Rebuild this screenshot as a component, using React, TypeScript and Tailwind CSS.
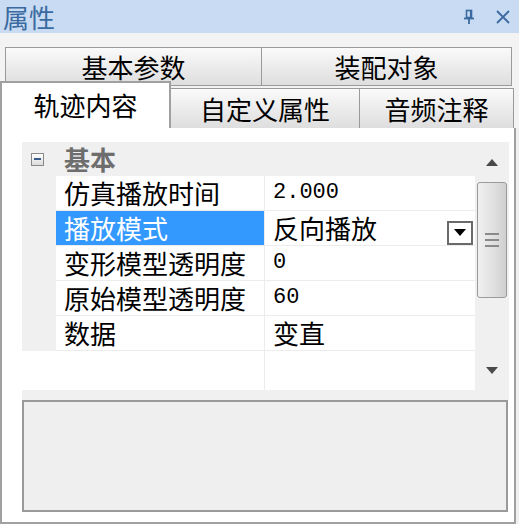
import React from "react";

const cjk = { fontFamily: '"Noto Sans CJK SC", "Noto Sans", sans-serif' };
const mono = { fontFamily: '"Liberation Mono", "Noto Sans CJK SC", monospace' };

interface Prop {
  name: string;
  value: string;
  numeric?: boolean;
  selected?: boolean;
  dropdown?: boolean;
}

const props: Prop[] = [
  { name: "仿真播放时间", value: "2.000", numeric: true },
  { name: "播放模式", value: "反向播放", selected: true, dropdown: true },
  { name: "变形模型透明度", value: "0", numeric: true },
  { name: "原始模型透明度", value: "60", numeric: true },
  { name: "数据", value: "变直" },
];

function Tab({ label, className }: { label: string; className: string }) {
  return (
    <div
      className={`flex items-center justify-center border border-[#9a9a9a] bg-gradient-to-b from-[#fafafa] to-[#dedede] text-[26px] leading-none text-black ${className}`}
    >
      {label}
    </div>
  );
}

export default function App() {
  return (
    <div className="w-[519px] h-[524px] bg-[#f0f0f0] overflow-hidden" style={cjk}>
      {/* Title bar */}
      <div className="h-[33px] bg-[#c8dbf2] flex items-center justify-between pl-[3px] pr-[8px]">
        <span className="text-[26px] leading-[33px] text-[#3a6aa0]">属性</span>
        <div className="flex items-center gap-[20px]">
          <svg width="12" height="16" viewBox="0 0 12 16" className="mt-[1px]">
            <rect x="3.5" y="1.5" width="5" height="7" fill="none" stroke="#3a6aa0" strokeWidth="1.6" />
            <line x1="1" y1="9.5" x2="11" y2="9.5" stroke="#3a6aa0" strokeWidth="1.8" />
            <line x1="6" y1="9.5" x2="6" y2="15" stroke="#3a6aa0" strokeWidth="1.8" />
            <line x1="7.5" y1="2" x2="7.5" y2="8.5" stroke="#3a6aa0" strokeWidth="1.2" />
          </svg>
          <svg width="16" height="16" viewBox="0 0 16 16">
            <path d="M2 2 L14 14 M14 2 L2 14" stroke="#3a6aa0" strokeWidth="1.8" />
          </svg>
        </div>
      </div>

      {/* Tabs */}
      <div className="bg-[#f3f3f3] pt-[14px]">
        <div className="flex pl-[5px] pr-[6px] h-[39px]">
          <Tab label="基本参数" className="w-[257px] h-[39px]" />
          <Tab label="装配对象" className="w-[251px] h-[39px] -ml-[1px]" />
        </div>
        <div className="flex items-end h-[47px] -mt-[5px] relative">
          <div className="relative z-10 w-[171px] h-[47px] bg-white border-l-2 border-t-2 border-r-2 border-[#a0a0a0] flex items-center justify-center text-[26px] leading-none text-black pb-[2px]">
            轨迹内容
          </div>
          <Tab label="自定义属性" className="w-[190px] h-[40px] -ml-[1px] border-b-0" />
          <Tab label="音频注释" className="w-[155px] h-[40px] -ml-[1px] border-b-0" />
        </div>
      </div>

      {/* Content */}
      <div className="w-[516px] h-[396px] bg-white border-l-2 border-r-2 border-b-2 border-[#a0a0a0] pt-[14px] pl-[20px]">
        {/* Property grid */}
        <div className="w-[487px] h-[248px] flex">
          <div className="w-[453px] flex flex-col">
            {/* Category */}
            <div className="h-[34px] bg-[#f0f0f0] flex items-center">
              <div className="ml-[9px] w-[13px] h-[13px] border border-[#8a8a8a] bg-gradient-to-b from-white to-[#dcdcdc] flex items-center justify-center">
                <div className="w-[7px] h-[2px] bg-[#3a5a8a]" />
              </div>
              <span className="ml-[20px] text-[26px] leading-none font-bold text-[#6e6e6e]">基本</span>
            </div>
            {props.map((p) => (
              <div key={p.name} className="h-[35px] flex">
                <div className="w-[34px] bg-[#f0f0f0]" />
                <div
                  className={`w-[208px] flex items-center pl-[8px] text-[26px] leading-none border-b border-[#ececec] ${
                    p.selected ? "bg-[#3399ff] text-white" : "text-black"
                  }`}
                >
                  {p.name}
                </div>
                <div className="flex-1 flex items-center justify-between border-l border-b border-[#ececec] pl-[8px] pr-[2px]">
                  {p.numeric ? (
                    <span className="text-[22px] leading-none text-black" style={mono}>
                      {p.value}
                    </span>
                  ) : (
                    <span className="text-[26px] leading-none text-black">{p.value}</span>
                  )}
                  {p.dropdown && (
                    <div className="self-end w-[26px] h-[24px] border-2 border-[#6a6a6a] bg-white flex items-center justify-center">
                      <svg width="12" height="8" viewBox="0 0 12 8">
                        <path d="M0 0 H12 L6 7 Z" fill="#000" />
                      </svg>
                    </div>
                  )}
                </div>
              </div>
            ))}
            <div className="flex-1 flex">
              <div className="w-[242px]" />
              <div className="flex-1 border-l border-[#ececec]" />
            </div>
          </div>
          {/* Scrollbar */}
          <div className="w-[34px] bg-[#f0f0f0] flex flex-col items-center">
            <div className="h-[40px] flex items-center justify-center">
              <svg width="12" height="7" viewBox="0 0 12 7">
                <path d="M6 0 L12 7 H0 Z" fill="#4a4a4a" />
              </svg>
            </div>
            <div className="w-[30px] h-[116px] border border-[#9a9a9a] rounded-[3px] bg-gradient-to-r from-[#f0f0f0] via-[#e2e2e2] to-[#cfcfcf] flex flex-col items-center justify-center gap-[4px]">
              <div className="w-[14px] h-[2px] bg-[#8a8a8a]" />
              <div className="w-[14px] h-[2px] bg-[#8a8a8a]" />
              <div className="w-[14px] h-[2px] bg-[#8a8a8a]" />
            </div>
            <div className="flex-1 flex items-end justify-center pb-[16px]">
              <svg width="12" height="7" viewBox="0 0 12 7">
                <path d="M0 0 H12 L6 7 Z" fill="#4a4a4a" />
              </svg>
            </div>
          </div>
        </div>
        {/* Splitter */}
        <div className="w-[487px] h-[10px] bg-[#f0f0f0]" />
        {/* Description box */}
        <div className="w-[486px] h-[112px] border-2 border-[#9a9a9a] bg-[#efefef]" />
      </div>
    </div>
  );
}
